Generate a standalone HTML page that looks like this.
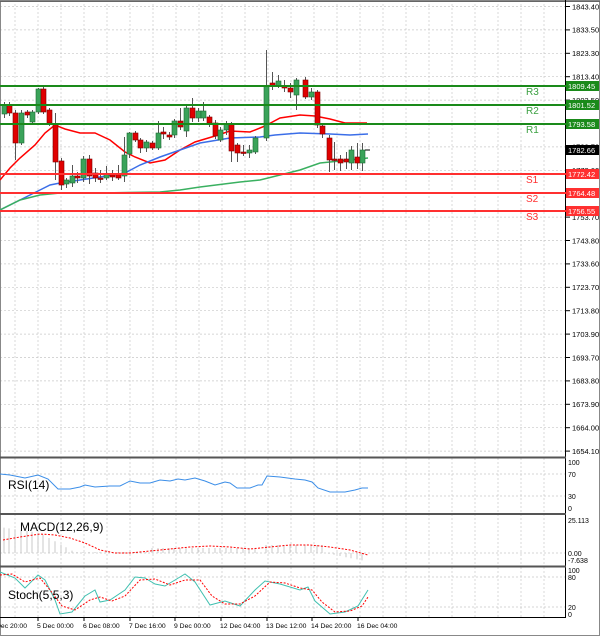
<!DOCTYPE html><html><head><meta charset="utf-8"><style>
body{margin:0;background:#fff;width:600px;height:636px;overflow:hidden;font-family:"Liberation Sans",sans-serif}
svg{display:block}
</style></head><body>
<svg id="s" width="600" height="636" xmlns="http://www.w3.org/2000/svg" font-family="Liberation Sans, sans-serif">
<rect x="0" y="0" width="600" height="636" fill="#fff"/>
<g id="grid"></g>
<g id="main"></g>
<g id="ax" font-size="7.5" fill="#000"></g>
</svg>
<script>
var NS="http://www.w3.org/2000/svg",s=document.getElementById('s');
function el(t,a,p,txt){var e=document.createElementNS(NS,t);for(var k in a)e.setAttribute(k,a[k]);if(txt!=null)e.textContent=txt;(p||s).appendChild(e);return e;}
function pl(pts,c,w,dash){el('polyline',{points:pts.map(function(p){return p.join(',')}).join(' '),fill:'none',stroke:c,'stroke-width':w||1,'stroke-dasharray':dash||''});}
var g=document.getElementById('grid'),ax=document.getElementById('ax');
for(var x=15;x<566;x+=23){ [[0,456],[458,512],[514,565],[567,617]].forEach(function(r){el('line',{x1:x,y1:r[0],x2:x,y2:r[1],stroke:'#c8c8c8','stroke-dasharray':'2,2','stroke-width':0.7},g);});}
var labs=["1843.40","1833.50","1823.30","1813.40","1803.50","1793.60","1783.70","1773.60","1763.60","1753.70","1743.80","1733.60","1723.70","1713.80","1703.90","1693.70","1683.80","1673.90","1664.00","1654.10"];
for(var i=0;i<20;i++){var y=6.5+i*23.4;el('line',{x1:0,y1:y,x2:566,y2:y,stroke:'#c8c8c8','stroke-dasharray':'2,2','stroke-width':0.7},g);el('line',{x1:566,y1:y,x2:570,y2:y,stroke:'#000'},ax);el('text',{x:572,y:y+2.8},ax,labs[i]);}
[[474,496],[553],[577,607]].forEach(function(a){a.forEach(function(y){el('line',{x1:0,y1:y,x2:566,y2:y,stroke:'#c8c8c8','stroke-dasharray':'2,2','stroke-width':0.7},g);});});
el('rect',{x:0.5,y:0.5,width:599,height:635,fill:'none',stroke:'#888'});
el('line',{x1:0,y1:1.5,x2:600,y2:1.5,stroke:'#666'});
el('line',{x1:565.5,y1:0,x2:565.5,y2:618,stroke:'#000'});
[457,513.5,566].forEach(function(y){el('rect',{x:0,y:y-0.5,width:566,height:2,fill:'#555'});});
el('line',{x1:0,y1:617.5,x2:566,y2:617.5,stroke:'#000'});
pl([[0,180],[10,168],[20,158],[35,145],[45,133],[55,125],[65,129],[80,133],[95,133],[110,140],[125,152],[135,157],[150,163],[165,160],[180,150],[195,142],[215,136],[230,131],[250,132],[265,126],[280,118],[300,115],[315,116],[330,119],[345,123],[367,123]],'#f00',1.5);
pl([[0,210],[20,200],[40,190],[50,185],[60,183],[80,180],[100,177],[125,173],[140,165],[160,157],[180,150],[200,143],[230,138],[260,137],[275,135],[300,133],[330,134],[350,135],[368,134]],'#3b6ee8',1.5);
pl([[0,210],[20,200],[40,195],[60,193],[100,193],[160,192],[180,190],[200,187],[240,182],[260,180],[280,175],[300,170],[320,163],[340,161],[368,158]],'#3ab060',1.5);
var C=[[4,114,105,102,118],[9,105,113,102,116],[15,113,143,110,160],[21,143,113,110,145],[27,112,115,110,118],[32,122,112,110,124],[38,112,89,88,114],[43,89,112,86,114],[49,110,123,108,126],[55,124,162,113,180],[61,161,185,158,190],[66,184,180,178,188],[72,183,176,165,187],[77,176,178,172,183],[83,178,159,156,182],[89,159,176,155,184],[95,173,178,168,182],[100,178,179,170,183],[106,178,174,166,180],[112,175,177,170,181],[118,174,178,165,180],[124,176,155,137,182],[129,154,133,132,158],[135,133,140,131,142],[140,140,148,138,153],[146,148,142,140,152],[152,143,148,141,150],[158,148,133,121,150],[163,132,134,127,139],[169,135,137,132,140],[174,135,121,119,138],[180,121,127,108,130],[186,131,108,106,137],[192,108,118,98,122],[198,118,111,108,122],[203,118,111,102,121],[209,117,123,115,127],[215,123,136,120,139],[220,140,130,127,142],[226,130,124,121,135],[231,124,151,122,162],[237,145,153,143,162],[243,152,153,145,156],[249,153,150,145,158],[255,152,138,136,154],[266,138,86,50,141],[272,83,86,72,90],[278,86,81,75,88],[284,86,88,80,92],[290,88,92,83,98],[296,95,80,78,110],[305,80,97,77,99],[311,97,92,88,100],[317,92,125,90,128],[322,126,134,124,138],[329,138,160,135,172],[334,159,160,142,170],[340,159,163,155,171],[346,159,162,152,169],[351,163,150,146,170],[357,157,163,143,169],[362,163,150,143,171]];
C.forEach(function(c){var up=c[2]<c[1];el('line',{x1:c[0]+0.5,y1:c[3],x2:c[0]+0.5,y2:c[4],stroke:'#555'});var t=Math.min(c[1],c[2]),h=Math.max(1.5,Math.abs(c[1]-c[2]));el('rect',{x:c[0]-2,y:t,width:5,height:h,fill:up?'#3aa35a':'#e00000',stroke:up?'#1d6a33':'#7a0000','stroke-width':0.6});});
el('line',{x1:365,y1:150,x2:370,y2:150,stroke:'#000'});
[[86,'#1a8a1a','R3','1809.45'],[105,'#1a8a1a','R2','1801.52'],[124,'#1a8a1a','R1','1793.58'],[174,'#ff3030','S1','1772.42'],[193,'#ff3030','S2','1764.48'],[211,'#ff3030','S3','1756.55']].forEach(function(l){el('rect',{x:0,y:l[0]-1,width:566,height:2,fill:l[1]});el('text',{x:526,y:l[0]+9,'font-size':10,fill:l[1]==='#1a8a1a'?'#3aa040':'#ff3030'},null,l[2]);el('rect',{x:566,y:l[0]-5,width:33,height:10,fill:l[1]});el('text',{x:568,y:l[0]+3,'font-size':7.5,fill:'#fff'},null,l[3]);});
el('rect',{x:566,y:145,width:33,height:10,fill:'#000'});el('text',{x:568,y:153,'font-size':7.5,fill:'#fff'},null,'1782.66');
pl([[0,474],[10,475],[25,478],[38,475],[48,479],[58,489],[70,489],[80,487],[85,485],[95,487],[110,486],[120,486],[130,481],[140,483],[150,483],[160,480],[170,481],[178,479],[185,480],[195,478],[205,481],[215,485],[225,482],[230,483],[237,488],[250,488],[258,485],[262,485],[267,476],[280,477],[295,479],[305,480],[312,482],[318,488],[330,492],[345,492],[355,490],[362,488],[368,488]],'#3b8ee8',1);
el('text',{x:8,y:489,'font-size':12},null,'RSI(14)');
[['100',462],['70',474],['30',496],['0',508]].forEach(function(a){el('text',{x:568,y:a[1]+3,'font-size':7},ax,a[0]);});
for(var i=0;i<C.length;i++){var x=C[i][0];var h;if(x<40)h=26-x*0.15;else if(x<75)h=20-(x-40)*0.55;else if(x<150)h=1;else if(x<260)h=5;else if(x<325)h=8;else h=-(x-325)*0.2;el('line',{x1:x,y1:553,x2:x,y2:553-h,stroke:'#c4c4c4','stroke-width':0.9});}
pl([[3,540],[20,537],[40,534],[55,535],[70,538],[85,543],[100,550],[115,553],[130,553],[150,551],[170,549],[190,547],[210,546],[230,547],[250,549],[270,547],[290,545],[310,545],[330,547],[350,550],[368,555]],'#f00',1,'2,1.5');
el('text',{x:20,y:531,'font-size':12},null,'MACD(12,26,9)');
[['25.113',520],['0.00',553],['-7.638',560]].forEach(function(a){el('text',{x:568,y:a[1]+3,'font-size':7},ax,a[0]);});
pl([[0,572],[15,578],[25,588],[38,575],[45,580],[55,600],[60,614],[72,612],[85,596],[95,590],[100,602],[110,600],[125,590],[135,577],[145,578],[155,584],[165,586],[175,580],[185,574],[195,582],[210,605],[225,601],[240,606],[255,590],[265,581],[280,584],[300,590],[308,587],[315,601],[330,614],[345,612],[358,606],[368,590]],'#40c0b0',1);
pl([[0,575],[12,574],[25,582],[40,578],[50,590],[62,606],[75,610],[90,600],[100,597],[112,601],[125,596],[140,580],[155,579],[170,585],[185,580],[200,580],[212,596],[225,604],[240,604],[255,596],[270,582],[285,583],[300,588],[312,590],[322,602],[335,612],[350,611],[362,606],[368,597]],'#f00',1,'2,1.5');
el('text',{x:8,y:599,'font-size':12},null,'Stoch(5,5,3)');
[['100',570],['80',577],['20',607],['0',614]].forEach(function(a){el('text',{x:568,y:a[1]+3,'font-size':7},ax,a[0]);});
[['Dec 20:00',-4],['5 Dec 00:00',37],['6 Dec 08:00',83],['7 Dec 16:00',129],['9 Dec 00:00',174],['12 Dec 04:00',220],['13 Dec 12:00',266],['14 Dec 20:00',311],['16 Dec 04:00',357]].forEach(function(a){el('line',{x1:a[1]+1,y1:617,x2:a[1]+1,y2:621,stroke:'#000'});el('text',{x:a[1],y:628,'font-size':6.8},null,a[0]);});
</script>
</body></html>
